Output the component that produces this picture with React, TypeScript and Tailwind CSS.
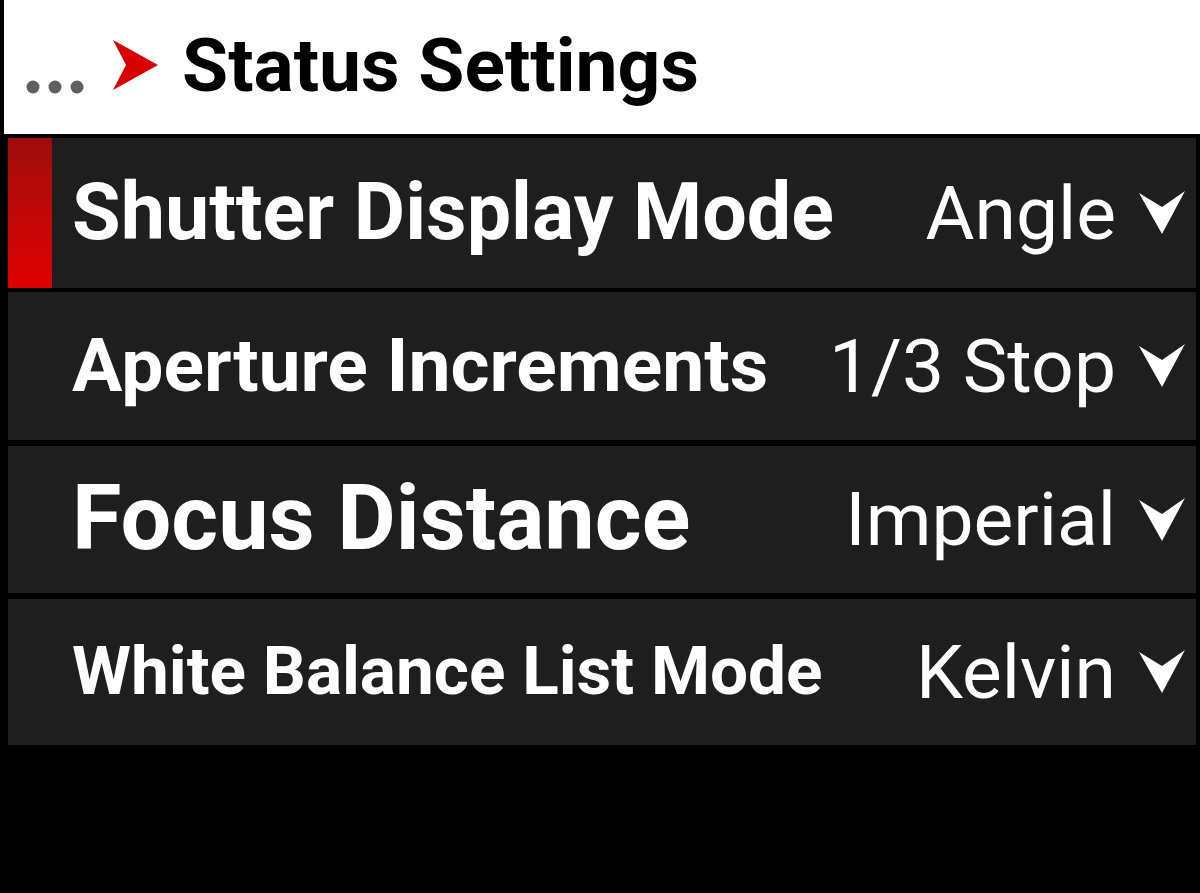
import React from "react";

const rows = [
  { label: "Shutter Display Mode", value: "Angle", size: "text-[79px]", h: "h-[150px]", mt: "mt-[4px]", active: true },
  { label: "Aperture Increments", value: "1/3 Stop", size: "text-[75px]", h: "h-[148px]", mt: "mt-[4px]", active: false },
  { label: "Focus Distance", value: "Imperial", size: "text-[90px]", h: "h-[147px]", mt: "mt-[6px]", active: false },
  { label: "White Balance List Mode", value: "Kelvin", size: "text-[67.5px]", h: "h-[146px]", mt: "mt-[6px]", active: false },
];

function Chevron() {
  return (
    <svg width="48" height="46" viewBox="0 0 48 46" className="shrink-0">
      <polygon points="1,3 24,17 47,1 24,44" fill="#ffffff" />
    </svg>
  );
}

export default function App() {
  return (
    <div className="w-[1200px] h-[893px] bg-black overflow-hidden" style={{ fontFamily: "Roboto, 'Liberation Sans', sans-serif" }}>
      <div className="ml-[4px] h-[134px] bg-white flex items-center">
        <svg width="178" height="134" viewBox="0 0 178 134" className="shrink-0">
          <circle cx="29" cy="87" r="6.5" fill="#5f5f5f" />
          <circle cx="51" cy="87" r="6.5" fill="#5f5f5f" />
          <circle cx="73" cy="87" r="6.5" fill="#5f5f5f" />
          <polygon points="109,40 154,65 109,90 122,65" fill="#d90000" />
        </svg>
        <span className="text-[75px] font-bold text-black leading-none -mt-[4px]">Status Settings</span>
      </div>
      <div className="flex flex-col">
        {rows.map((r) => (
          <div key={r.label} className={`${r.mt} ${r.h} ml-[8px] mr-[4px] bg-[#1e1e1e] flex items-center`}>
            <div className={`w-[44px] self-stretch ${r.active ? "bg-gradient-to-b from-[#9e0c0c] to-[#e20000]" : ""}`} />
            <span className={`ml-[20px] ${r.size} font-bold text-white leading-none whitespace-nowrap -mt-[2px]`}>{r.label}</span>
            <span className="ml-auto text-[75px] text-white leading-none whitespace-nowrap">{r.value}</span>
            <div className="ml-[22px] mr-[10px]">
              <Chevron />
            </div>
          </div>
        ))}
      </div>
    </div>
  );
}
